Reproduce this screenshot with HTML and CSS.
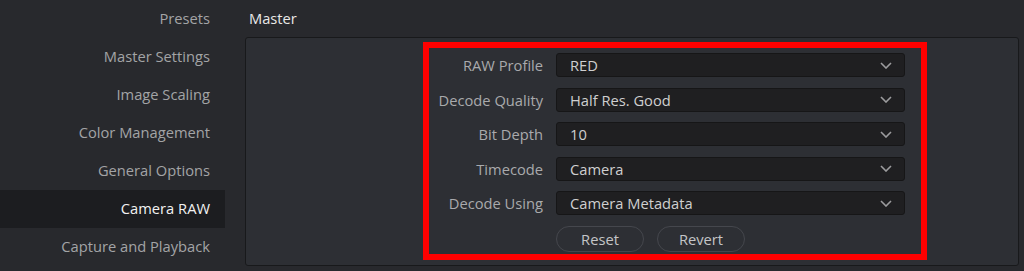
FILE: index.html
```html
<!DOCTYPE html>
<html lang="en">
<head>
    <meta charset="UTF-8">
    <title>Project Settings - Camera RAW</title>
    <link rel="stylesheet" href="styles.css">
</head>
<body>
    <div class="sidebar">
        <div class="nav-item">Presets</div>
        <div class="nav-item">Master Settings</div>
        <div class="nav-item">Image Scaling</div>
        <div class="nav-item">Color Management</div>
        <div class="nav-item">General Options</div>
        <div class="nav-item active">Camera RAW</div>
        <div class="nav-item">Capture and Playback</div>
    </div>

    <div class="main">
        <div class="title">Master</div>
        <div class="panel">
            <div class="raw-form">
                <label class="field-label">RAW Profile</label>
                <div class="select">RED <svg class="chevron" viewBox="0 0 12 7"><path d="M1 1l5 5 5-5"/></svg></div>

                <label class="field-label">Decode Quality</label>
                <div class="select">Half Res. Good <svg class="chevron" viewBox="0 0 12 7"><path d="M1 1l5 5 5-5"/></svg></div>

                <label class="field-label">Bit Depth</label>
                <div class="select">10 <svg class="chevron" viewBox="0 0 12 7"><path d="M1 1l5 5 5-5"/></svg></div>

                <label class="field-label">Timecode</label>
                <div class="select">Camera <svg class="chevron" viewBox="0 0 12 7"><path d="M1 1l5 5 5-5"/></svg></div>

                <label class="field-label">Decode Using</label>
                <div class="select">Camera Metadata <svg class="chevron" viewBox="0 0 12 7"><path d="M1 1l5 5 5-5"/></svg></div>

                <div class="buttons">
                    <button class="pill">Reset</button>
                    <button class="pill">Revert</button>
                </div>
            </div>
        </div>
    </div>
</body>
</html>
```

FILE: styles.css
```css
body {
    margin: 0;
    height: 271px;
    display: flex;
    background-color: #28292d;
    font-family: "Open Sans", "Noto Sans", sans-serif;
    font-size: 14.7px;
    color: #a3a4a6;
    overflow: hidden;
}

.sidebar {
    width: 225px;
    flex-shrink: 0;
}

.nav-item {
    height: 38px;
    line-height: 37px;
    text-align: right;
    padding-right: 15px;
}

.nav-item.active {
    background-color: #1c1d20;
    color: #f2f2f2;
}

.main {
    flex: 1;
    padding-left: 20px;
    padding-right: 5px;
}

.title {
    height: 37px;
    line-height: 36px;
    padding-left: 4px;
    color: #e8e8e8;
}

.panel {
    height: 229px;
    background-color: #2d2f34;
    border: 1px solid #18191b;
    border-radius: 3px;
    padding-top: 4px;
    padding-left: 177px;
    box-sizing: border-box;
}

.raw-form {
    width: 504px;
    height: 218px;
    box-sizing: border-box;
    border: 6px solid #ff0000;
    padding: 5px 16px 0 0;
    display: grid;
    grid-template-columns: 114px 349px;
    column-gap: 13px;
    grid-auto-rows: 24px;
    row-gap: 10.5px;
    align-items: center;
}

.field-label {
    text-align: right;
    color: #a9aaac;
}

.select {
    height: 24px;
    box-sizing: border-box;
    background-color: #1f1f21;
    border: 1px solid #161617;
    border-radius: 3px;
    padding-left: 13px;
    padding-right: 12px;
    display: flex;
    align-items: center;
    justify-content: space-between;
    color: #cfcfd0;
}

.chevron {
    width: 12px;
    height: 7px;
    fill: none;
    stroke: #9c9c9e;
    stroke-width: 1.6;
}

.buttons {
    grid-column: 2;
    display: flex;
    gap: 13px;
    margin-top: 2px;
}

.pill {
    width: 88px;
    height: 26px;
    border-radius: 13px;
    border: 1px solid #45474d;
    background-color: #2d2f34;
    color: #c4c5c7;
    font-family: inherit;
    font-size: 14.7px;
    padding: 0;
}
```
